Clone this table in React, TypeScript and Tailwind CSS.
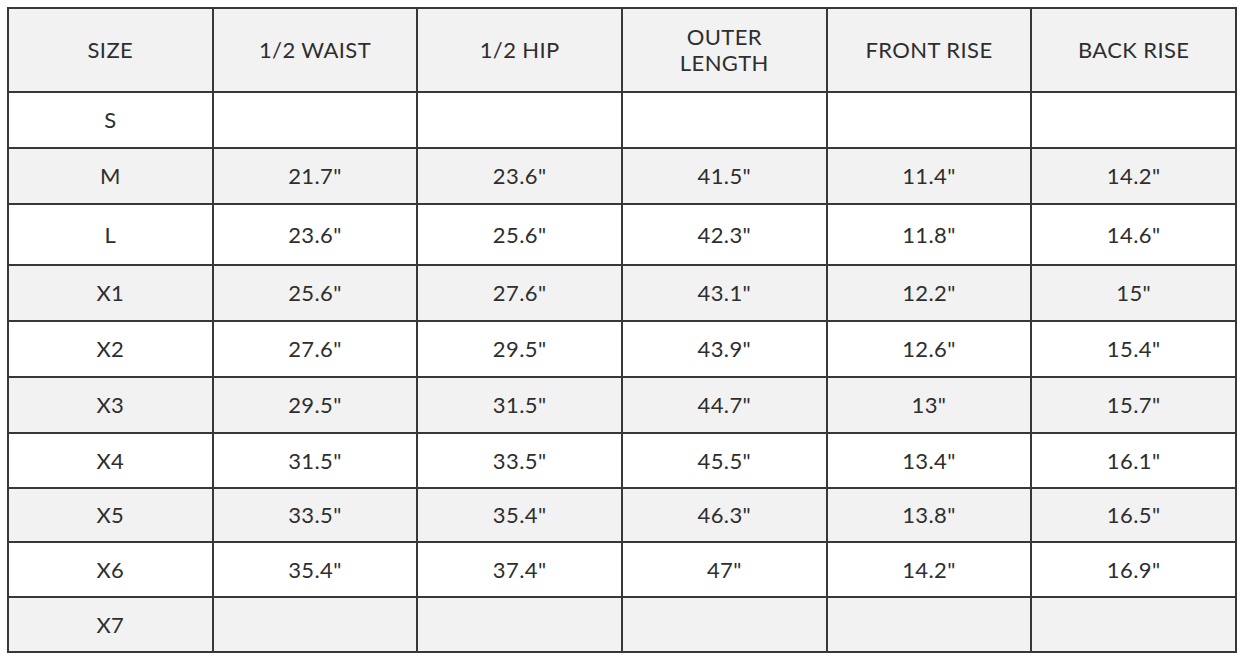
import React from "react";

const header: React.ReactNode[] = [
  "SIZE",
  "1/2 WAIST",
  "1/2 HIP",
  <>OUTER<br />LENGTH</>,
  "FRONT RISE",
  "BACK RISE",
];

const rows: { h: string; cells: string[] }[] = [
  { h: "h-[54px]", cells: ["S", "", "", "", "", ""] },
  { h: "h-[54px]", cells: ["M", '21.7"', '23.6"', '41.5"', '11.4"', '14.2"'] },
  { h: "h-[59px]", cells: ["L", '23.6"', '25.6"', '42.3"', '11.8"', '14.6"'] },
  { h: "h-[54px]", cells: ["X1", '25.6"', '27.6"', '43.1"', '12.2"', '15"'] },
  { h: "h-[54px]", cells: ["X2", '27.6"', '29.5"', '43.9"', '12.6"', '15.4"'] },
  { h: "h-[54px]", cells: ["X3", '29.5"', '31.5"', '44.7"', '13"', '15.7"'] },
  { h: "h-[53px]", cells: ["X4", '31.5"', '33.5"', '45.5"', '13.4"', '16.1"'] },
  { h: "h-[52px]", cells: ["X5", '33.5"', '35.4"', '46.3"', '13.8"', '16.5"'] },
  { h: "h-[53px]", cells: ["X6", '35.4"', '37.4"', '47"', '14.2"', '16.9"'] },
  { h: "h-[53px]", cells: ["X7", "", "", "", "", ""] },
];

export default function App() {
  return (
    <div className="w-[1244px] h-[662px] bg-white pl-[7px] pt-[7px]">
      <div
        className="w-[1230px] grid grid-cols-6 gap-[2px] p-[2px] bg-[#383838] text-[#2e2e2e] text-[22px] leading-[24px] tracking-[0.4px]"
        style={{ fontFamily: "Lato, 'Open Sans', sans-serif" }}
      >
        {header.map((t, i) => (
          <div key={i} className="h-[82px] bg-[#f2f2f2] flex items-center justify-center text-center leading-[26px]">
            <span>{t}</span>
          </div>
        ))}
        {rows.map((r, ri) =>
          r.cells.map((c, ci) => (
            <div
              key={`${ri}-${ci}`}
              className={`${r.h} ${ri % 2 === 0 ? "bg-white" : "bg-[#f2f2f2]"} flex items-center justify-center text-center`}
            >
              {c}
            </div>
          ))
        )}
      </div>
    </div>
  );
}
